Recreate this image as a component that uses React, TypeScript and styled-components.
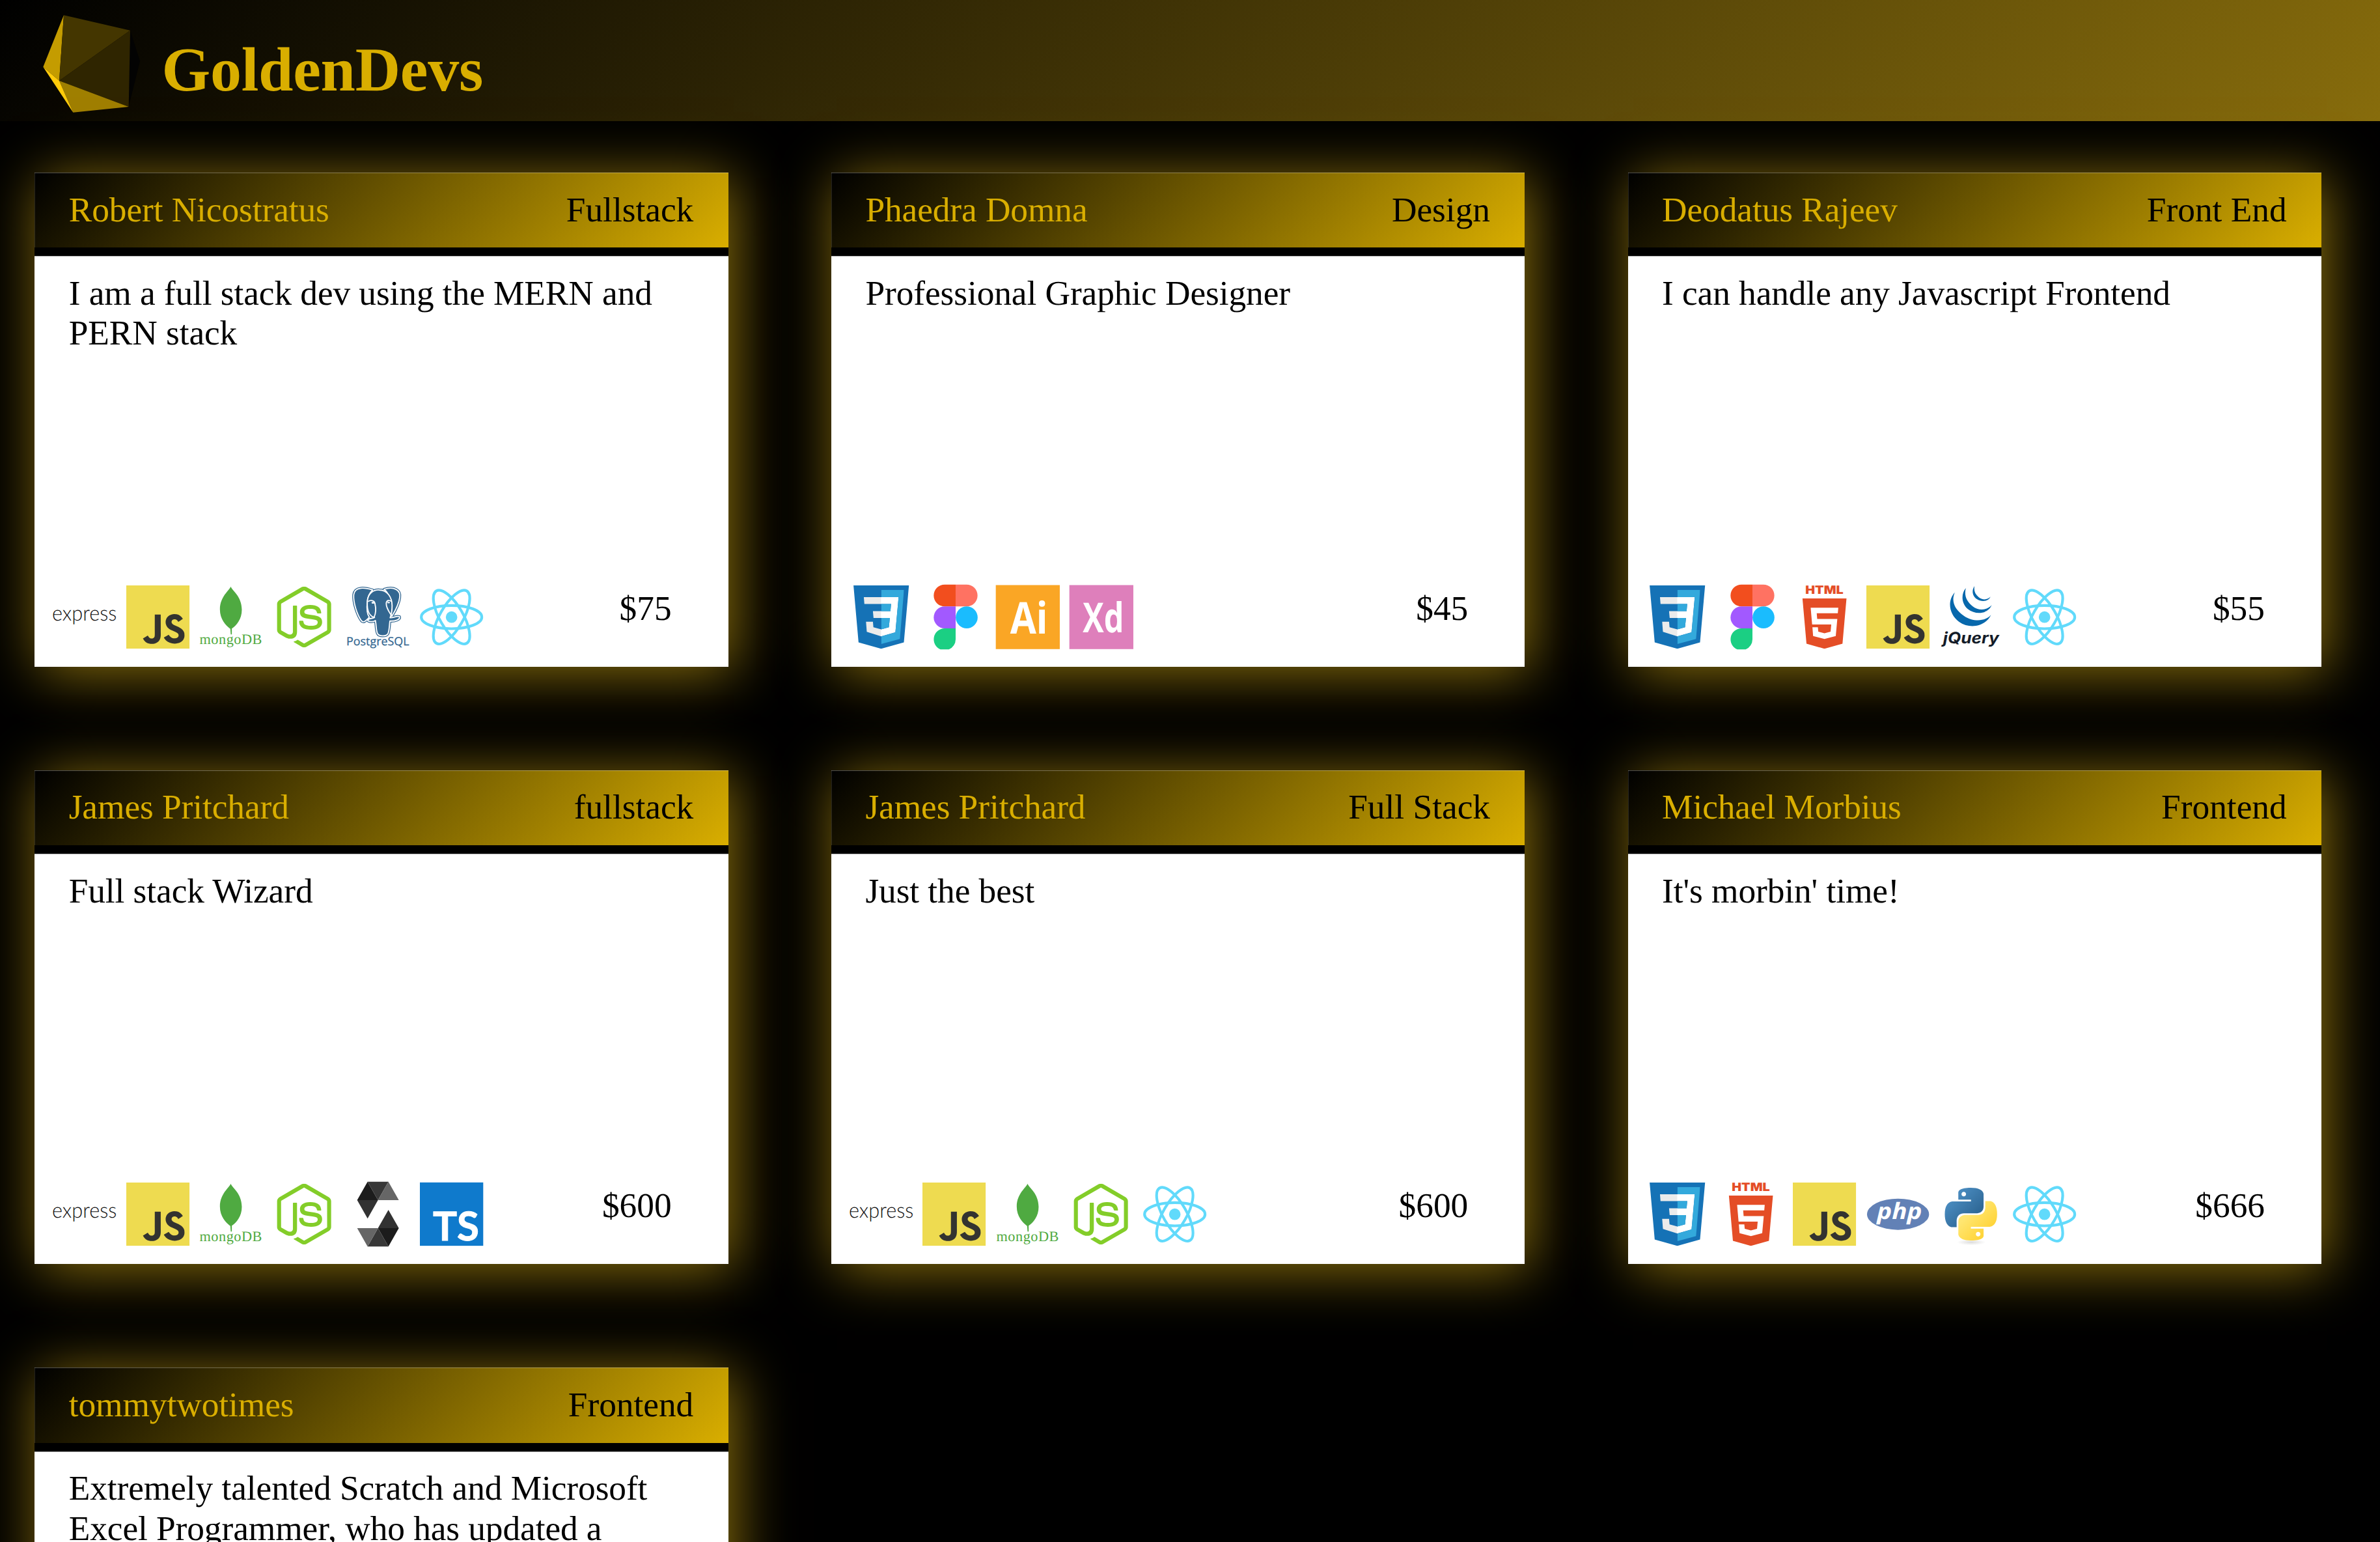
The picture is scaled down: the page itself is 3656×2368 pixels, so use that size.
import React from 'react';
import styled, { createGlobalStyle } from 'styled-components';
import { SiCss3, SiHtml5, SiJavascript, SiNodedotjs } from 'react-icons/si';

const gold = '#d9ae00';

const GlobalStyle = createGlobalStyle`
  * { box-sizing: border-box; }
  html, body { margin: 0; padding: 0; background: #000; }
  body {
    font-family: "Liberation Serif", "Times New Roman", serif;
    text-rendering: geometricPrecision;
  }
`;

const Page = styled.div`
  width: 3656px;
  height: 2368px;
  overflow: hidden;
  background: #000;
`;

const TopBar = styled.header`
  display: flex;
  align-items: center;
  height: 186px;
  padding: 0 0 0 66px;
  background: linear-gradient(135deg, #000, #876c0c);
`;

const LogoMark = styled.svg`
  display: block;
  flex: none;
  width: 150px;
  height: 150px;
  margin-top: 10px;
`;

const Brand = styled.h1`
  margin: 28px 0 0 32.5px;
  font-size: 96px;
  line-height: 110px;
  font-weight: 700;
  letter-spacing: -0.25px;
  color: ${gold};
`;

const CardGrid = styled.main`
  display: grid;
  grid-template-columns: repeat(3, 1065.4px);
  grid-auto-rows: 758.6px;
  column-gap: 158.3px;
  row-gap: 159px;
  padding: 79.3px 0 0 53.2px;
`;

const Card = styled.article`
  display: flex;
  flex-direction: column;
  background: #fff;
  box-shadow: 8px 8px 83px rgb(142, 114, 12);
`;

const CardHeader = styled.header`
  display: flex;
  justify-content: space-between;
  height: 128.2px;
  padding: 26.6px 53.3px 0;
  border-bottom: 13.4px solid #000;
  background: linear-gradient(135deg, #000, #d9ae00) padding-box;
  box-shadow: inset 0 1px rgba(255, 255, 255, 0.3), inset 1px 0 rgba(255, 255, 255, 0.12);
  font-size: 53.33px;
  line-height: 61.3px;
`;

const Name = styled.span`
  margin-left: -0.8px;
  letter-spacing: -0.07px;
  color: ${gold};
`;

const Role = styled.span`
  color: #000;
`;

const Bio = styled.p`
  flex: 1;
  margin: 0;
  padding: 26.6px 53.3px 0 52.5px;
  box-shadow: inset 0 1px rgba(0, 0, 0, 0.3);
  font-size: 53.33px;
  line-height: 61.3px;
  letter-spacing: -0.07px;
  color: #000;
`;

const CardFooter = styled.footer`
  display: flex;
  justify-content: space-between;
  align-items: flex-start;
  height: 125px;
  padding: 0 87px 0 27.7px;
`;

const Stack = styled.div`
  display: flex;
  gap: 15.5px;
`;

const Glyph = styled.svg`
  display: block;
  flex: none;
  width: 97.3px;
  height: 97.3px;
  overflow: visible;
`;

const Price = styled.span`
  margin-top: 5px;
  font-size: 53.33px;
  line-height: 61.3px;
`;

const Express = () => (
  <Glyph viewBox="62 56 292 292">
    <text x="59" y="218" fontFamily="Lato" fontWeight="300" fontSize="98" textLength="298" lengthAdjust="spacingAndGlyphs" fill="#111">express</text>
  </Glyph>
);

const JavaScript = () => (
  <Glyph viewBox="0 0 292 292">
    <rect x="20" y="20" width="266" height="266" fill="#333330" />
    <SiJavascript x="0" y="0" size="292" color="#eedb50" />
  </Glyph>
);

const Mongo = () => (
  <Glyph viewBox="739.5 56 292 292">
    <path d="M885 61 C889 78 936 104 936 168 C936 212 912 240 890 255 L890 282 L885 282 L883 256 C862 240 835 212 835 166 C835 106 880 78 885 61Z" fill="#4faa41" />
    <text x="741" y="327" fontFamily="Liberation Serif" fontSize="67" textLength="288" lengthAdjust="spacing" fill="#4faa41">mongoDB</text>
  </Glyph>
);

const Node = () => (
  <Glyph viewBox="28 56 292 292">
    <SiNodedotjs x="32" y="61" size="281" color="#83cd29" />
  </Glyph>
);

const elephant = [
  'M487 77 C455 67 405 58 400 100 C398 135 415 190 435 218 C445 232 456 218 472 203 C462 190 459 165 463 128 C466 104 472 92 487 77Z',
  'M540 74 C585 58 618 78 612 112 C608 145 592 172 576 198 C560 180 550 160 553 130 C570 115 560 90 540 74Z',
  'M463 128 C466 92 492 75 518 77 C555 78 577 110 577 150 C577 175 574 190 568 205 C584 206 596 195 611 200 C616 214 588 222 567 220 C564 240 565 262 558 278 C550 292 516 292 509 276 C502 258 505 240 500 218 C488 226 468 224 464 216 C472 204 484 212 496 204 C484 200 458 190 463 128Z',
];

const Postgres = () => (
  <Glyph viewBox="366 56 292 292">
    {elephant.map((d) => (
      <path key={`rim-${d}`} d={d} fill="none" stroke="#336791" strokeWidth="13" strokeLinejoin="round" />
    ))}
    {elephant.map((d) => (
      <path key={d} d={d} fill="#336791" stroke="#fff" strokeWidth="5.5" strokeLinejoin="round" />
    ))}
    <path d="M466 130 C478 122 496 124 498 140 C504 165 500 190 494 203" fill="none" stroke="#fff" strokeWidth="5.5" />
    <path d="M575 130 C564 122 552 124 550 138 C549 162 565 180 576 198" fill="none" stroke="#fff" strokeWidth="5.5" />
    <ellipse cx="489" cy="136" rx="7" ry="4" fill="#fff" />
    <ellipse cx="561" cy="135" rx="6" ry="3.5" fill="#fff" />
    <text x="366" y="333" fontFamily="Open Sans" fontSize="53" textLength="290" lengthAdjust="spacingAndGlyphs" fill="#336791" stroke="#336791" strokeWidth="0.8">PostgreSQL</text>
  </Glyph>
);

const ReactLogo = () => (
  <Glyph viewBox="-146 -146 292 292">
    <circle r="26.5" fill="#61dafb" />
    <g fill="none" stroke="#61dafb" strokeWidth="12.5">
      <ellipse rx="139.5" ry="53.5" />
      <ellipse rx="139.5" ry="53.5" transform="rotate(60)" />
      <ellipse rx="139.5" ry="53.5" transform="rotate(120)" />
    </g>
  </Glyph>
);

const Css = () => (
  <Glyph viewBox="0 0 292 292">
    <defs>
      <clipPath id="css-panel">
        <path d="M146 21 H251 L232 247 L146 270Z" />
      </clipPath>
    </defs>
    <rect x="50" y="40" width="96" height="210" fill="#ebebeb" />
    <rect x="146" y="40" width="90" height="200" fill="#fff" />
    <SiCss3 x="0" y="0" size="292" color="#1572b6" />
    <g clipPath="url(#css-panel)">
      <SiCss3 x="0" y="0" size="292" color="#33a9dc" />
    </g>
  </Glyph>
);

const Figma = () => (
  <Glyph viewBox="384 56 292 292">
    <path d="M537 52 H486.500 A50.500 50.500 0 0 0 486.500 153 H537Z" fill="#f24e1e" />
    <path d="M537 52 H587.500 A50.500 50.500 0 0 1 587.500 153 H537Z" fill="#ff7262" />
    <path d="M537 153 H486.500 A50.500 50.500 0 0 0 486.500 254 H537Z" fill="#a259ff" />
    <circle cx="588" cy="203.500" r="50.500" fill="#1abcfe" />
    <path d="M537 254 H486.500 A50.500 50.500 0 0 0 467 351 H506 A50.500 50.500 0 0 0 537 304Z" fill="#1bcf83" />
  </Glyph>
);

const Illustrator = () => (
  <Glyph viewBox="722 56 292 292">
    <rect x="721" y="54.500" width="295" height="295" fill="#faa625" />
    <text x="787" y="277" fontFamily="Open Sans" fontWeight="700" fontSize="202" textLength="174" lengthAdjust="spacingAndGlyphs" fill="#fff">Ai</text>
  </Glyph>
);

const Xd = () => (
  <Glyph viewBox="1061 56 292 292">
    <rect x="1060" y="54.500" width="295" height="295" fill="#de7fbb" />
    <text x="1122" y="272" fontFamily="Open Sans" fontWeight="700" fontSize="190" textLength="190" lengthAdjust="spacingAndGlyphs" fill="#fff">Xd</text>
  </Glyph>
);

const Html = () => (
  <Glyph viewBox="731 56 292 292">
    <text x="789" y="96" fontFamily="Inter" fontWeight="900" fontSize="53" textLength="175" lengthAdjust="spacingAndGlyphs" fill="#e44d26">HTML</text>
    <SiHtml5 x="761" y="116" size="232" color="#e44d26" />
  </Glyph>
);

const JQuery = () => (
  <Glyph viewBox="418.500 56 292 292">
    <g fill="#0868ac">
      <path d="M490 88 C455 125 462 190 510 224 C565 262 635 240 657 192 C632 222 575 226 532 196 C490 168 472 130 490 88Z" />
      <path d="M541 68 C518 95 520 140 550 165 C590 196 645 185 660 147 C640 170 600 175 572 152 C545 130 532 105 541 68Z" />
      <path d="M581 59 C567 78 570 105 593 120 C615 134 645 130 655 108 C640 125 615 123 600 110 C583 95 577 80 581 59Z" />
    </g>
    <text x="436" y="322" fontFamily="Inter" fontStyle="italic" fontWeight="700" fontSize="72" textLength="258" lengthAdjust="spacingAndGlyphs" fill="#131b28">jQuery</text>
  </Glyph>
);

const Solidity = () => (
  <Glyph viewBox="396 49 292 292">
    <path d="M446 130 L494 45 L542 130Z M542 259 H638 L590 344Z" fill="#1c1c1c" />
    <path d="M494 45 H590 L542 130Z M542 259 L590 344 H494Z" fill="#383838" />
    <path d="M590 45 L638 130 H542Z M446 259 H542 L494 344Z" fill="#666" />
    <path d="M446 130 H542 L494 215Z M590 175 L638 259 H542Z" fill="#323232" />
  </Glyph>
);

const TypeScript = () => (
  <Glyph viewBox="735 49 292 292">
    <rect x="735" y="48.500" width="292" height="292" fill="#0f7acc" />
    <text x="795" y="315" fontFamily="Lato" fontWeight="700" fontSize="184" textLength="213" lengthAdjust="spacingAndGlyphs" fill="#fff" stroke="#fff" strokeWidth="3">TS</text>
  </Glyph>
);

const Php = () => (
  <Glyph viewBox="79.500 49 292 292">
    <ellipse cx="225.500" cy="195" rx="143" ry="72" fill="#6281b6" />
    <text x="128" y="216" fontFamily="Open Sans" fontStyle="italic" fontWeight="700" fontSize="104" textLength="208" lengthAdjust="spacingAndGlyphs" fill="#fff">php</text>
  </Glyph>
);

const Python = () => (
  <Glyph viewBox="418 49 292 292">
    <defs>
      <linearGradient id="snake-blue" x1="0" y1="0" x2="1" y2="1">
        <stop offset="0.1" stopColor="#4f93c9" />
        <stop offset="0.75" stopColor="#2f6896" />
      </linearGradient>
      <linearGradient id="snake-yellow" x1="0" y1="0" x2="1" y2="1">
        <stop offset="0.3" stopColor="#ffe671" />
        <stop offset="0.8" stopColor="#ffd335" />
      </linearGradient>
      <radialGradient id="snake-shade">
        <stop offset="0" stopColor="#dcdcdc" />
        <stop offset="1" stopColor="#fff" />
      </radialGradient>
    </defs>
    <ellipse cx="566" cy="324" rx="66" ry="14" fill="url(#snake-shade)" />
    <g transform="translate(444 73) scale(10 10.130)">
      <path fill="url(#snake-blue)" d="M14.25.18l.9.2.73.26.59.3.45.32.34.34.25.34.16.33.1.3.04.26.02.2-.01.13V8.5l-.05.63-.13.55-.21.46-.26.38-.3.31-.33.25-.35.19-.35.14-.33.1-.3.07-.26.04-.21.02H8.77l-.69.05-.59.14-.5.22-.41.27-.33.32-.27.35-.2.36-.15.37-.1.35-.07.32-.04.27-.02.21v3.06H3.17l-.21-.03-.28-.07-.32-.12-.35-.18-.36-.26-.36-.36-.35-.46-.32-.59-.28-.73-.21-.88-.14-1.05-.05-1.23.06-1.22.16-1.04.24-.87.32-.71.36-.57.4-.44.42-.33.42-.24.4-.16.36-.1.32-.05.24-.01h.16l.06.01h8.16v-.83H6.18l-.01-2.75-.02-.37.05-.34.11-.31.17-.28.25-.26.31-.23.38-.2.44-.18.51-.15.58-.12.64-.1.71-.06.77-.04.84-.02 1.27.05zm-6.3 1.98l-.23.33-.08.41.08.41.23.34.33.22.41.09.41-.09.33-.22.23-.34.08-.41-.08-.41-.23-.33-.33-.22-.41-.09-.41.09z" />
      <path fill="url(#snake-yellow)" d="M21.04 6.11l.28.06.32.12.35.18.36.27.36.35.35.47.32.59.28.73.21.88.14 1.04.05 1.23-.06 1.23-.16 1.04-.24.86-.32.71-.36.57-.4.45-.42.33-.42.24-.4.16-.36.09-.32.05-.24.02-.16-.01h-8.22v.82h5.84l.01 2.76.02.36-.05.34-.11.31-.17.29-.25.25-.31.24-.38.2-.44.17-.51.15-.58.13-.64.09-.71.07-.77.04-.84.01-1.27-.04-1.07-.14-.9-.2-.73-.25-.59-.3-.45-.33-.34-.34-.25-.34-.16-.33-.1-.3-.04-.25-.02-.2.01-.13v-5.34l.05-.64.13-.54.21-.46.26-.38.3-.32.33-.24.35-.2.35-.14.33-.1.3-.06.26-.04.21-.02.13-.01h5.84l.69-.05.59-.14.5-.21.41-.28.33-.32.27-.35.2-.36.15-.36.1-.35.07-.32.04-.28.02-.21V6.07h2.09l.14.01zm-6.47 14.25l-.23.33-.08.41.08.41.23.33.33.23.41.08.41-.08.33-.23.23-.33.08-.41-.08-.41-.23-.33-.33-.23-.41-.08-.41.08z" />
    </g>
  </Glyph>
);

const icons = {
  express: Express,
  js: JavaScript,
  mongo: Mongo,
  node: Node,
  postgres: Postgres,
  react: ReactLogo,
  css: Css,
  figma: Figma,
  ai: Illustrator,
  xd: Xd,
  html: Html,
  jquery: JQuery,
  solidity: Solidity,
  ts: TypeScript,
  php: Php,
  python: Python,
};

type Tech = keyof typeof icons;

interface Dev {
  name: string;
  role: string;
  bio: string;
  stack: Tech[];
  price?: string;
}

const devs: Dev[] = [
  { name: 'Robert Nicostratus', role: 'Fullstack', bio: 'I am a full stack dev using the MERN and PERN stack', stack: ['express', 'js', 'mongo', 'node', 'postgres', 'react'], price: '$75' },
  { name: 'Phaedra Domna', role: 'Design', bio: 'Professional Graphic Designer', stack: ['css', 'figma', 'ai', 'xd'], price: '$45' },
  { name: 'Deodatus Rajeev', role: 'Front End', bio: 'I can handle any Javascript Frontend', stack: ['css', 'figma', 'html', 'js', 'jquery', 'react'], price: '$55' },
  { name: 'James Pritchard', role: 'fullstack', bio: 'Full stack Wizard', stack: ['express', 'js', 'mongo', 'node', 'solidity', 'ts'], price: '$600' },
  { name: 'James Pritchard', role: 'Full Stack', bio: 'Just the best', stack: ['express', 'js', 'mongo', 'node', 'react'], price: '$600' },
  { name: 'Michael Morbius', role: 'Frontend', bio: "It's morbin' time!", stack: ['css', 'html', 'js', 'php', 'python', 'react'], price: '$666' },
  { name: 'tommytwotimes', role: 'Frontend', bio: 'Extremely talented Scratch and Microsoft Excel Programmer, who has updated a', stack: [] },
];

const DevCard = ({ dev }: { dev: Dev }) => (
  <Card>
    <CardHeader>
      <Name>{dev.name}</Name>
      <Role>{dev.role}</Role>
    </CardHeader>
    <Bio>{dev.bio}</Bio>
    {dev.price && (
      <CardFooter>
        <Stack>
          {dev.stack.map((tech) => {
            const Icon = icons[tech];
            return <Icon key={tech} />;
          })}
        </Stack>
        <Price>{dev.price}</Price>
      </CardFooter>
    )}
  </Card>
);

const App = () => (
  <>
    <GlobalStyle />
    <Page>
      <TopBar>
        <LogoMark viewBox="66 23 150 150">
          <path d="M98 23.300 L200 46.700 L215 94 L197.500 164 L112 172.700 L66.300 102.700Z" fill="#030303" />
          <path d="M98 23.300 L66.300 102.700 L91 124Z" fill="#c49c00" />
          <path d="M98 23.300 L200 46.700 L91 124Z" fill="#443600" />
          <path d="M200 46.700 L197.700 164 L91 124Z" fill="#2f2500" />
          <path d="M91 124 L197.700 164 L112.300 172.700Z" fill="#9f7f00" />
          <path d="M66.300 102.700 L91 124 L112.300 172.700Z" fill="#ffcb0a" />
        </LogoMark>
        <Brand>GoldenDevs</Brand>
      </TopBar>
      <CardGrid>
        {devs.map((dev, i) => (
          <DevCard key={i} dev={dev} />
        ))}
      </CardGrid>
    </Page>
  </>
);

export default App;
